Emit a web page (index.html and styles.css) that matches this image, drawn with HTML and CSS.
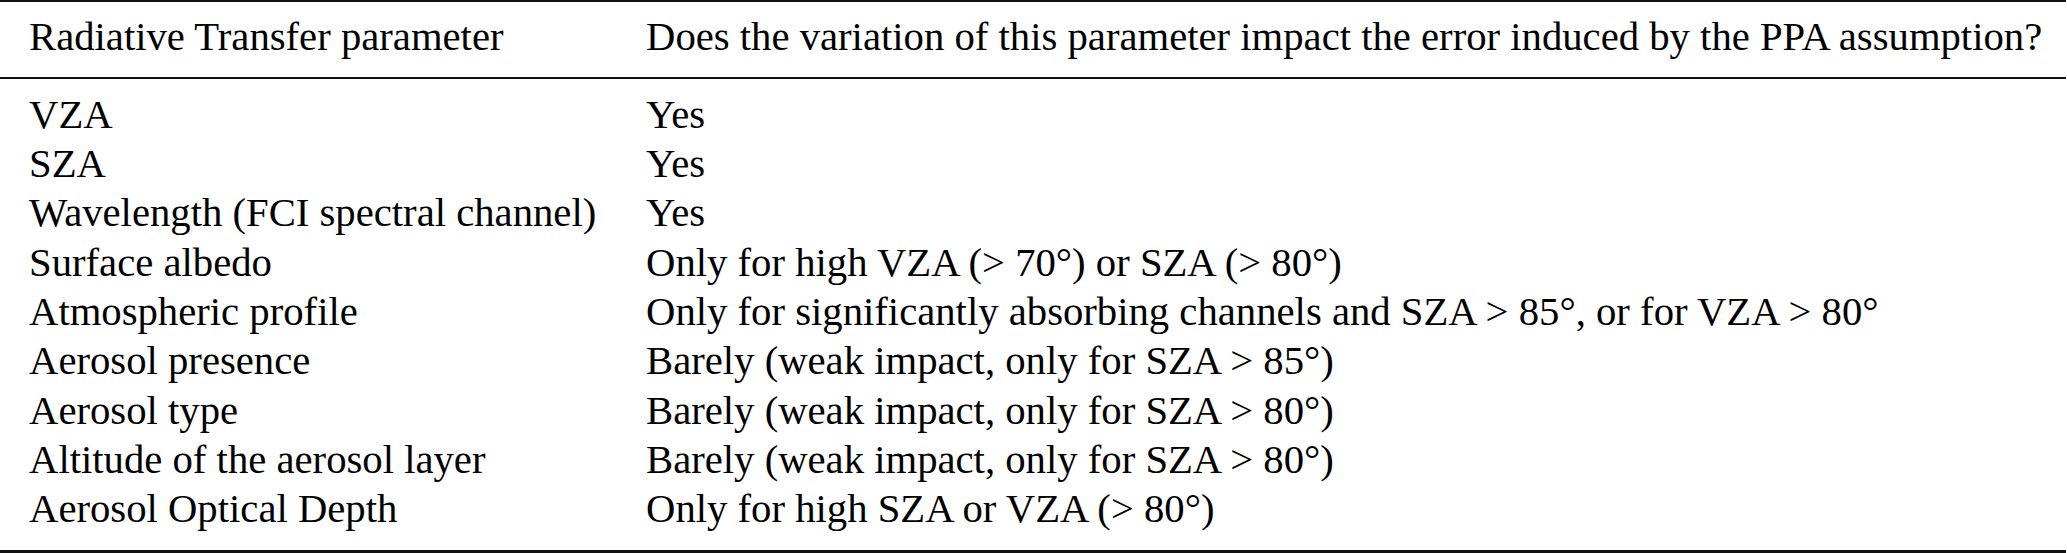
FILE: index.html
```html
<!DOCTYPE html>
<html lang="en">
<head>
<meta charset="utf-8">
<title>Radiative Transfer parameters</title>
<link rel="stylesheet" href="styles.css">
</head>
<body>
<div class="tbl">
  <div class="head">
    <div class="row">
      <span>Radiative Transfer parameter</span>
      <span>Does the variation of this parameter impact the error induced by the PPA assumption?</span>
    </div>
  </div>
  <div class="body">
    <div class="row"><span>VZA</span><span>Yes</span></div>
    <div class="row"><span>SZA</span><span>Yes</span></div>
    <div class="row"><span>Wavelength (FCI spectral channel)</span><span>Yes</span></div>
    <div class="row"><span>Surface albedo</span><span>Only for high VZA (&gt; 70°) or SZA (&gt; 80°)</span></div>
    <div class="row"><span>Atmospheric profile</span><span>Only for significantly absorbing channels and SZA &gt; 85°, or for VZA &gt; 80°</span></div>
    <div class="row"><span>Aerosol presence</span><span>Barely (weak impact, only for SZA &gt; 85°)</span></div>
    <div class="row"><span>Aerosol type</span><span>Barely (weak impact, only for SZA &gt; 80°)</span></div>
    <div class="row"><span>Altitude of the aerosol layer</span><span>Barely (weak impact, only for SZA &gt; 80°)</span></div>
    <div class="row"><span>Aerosol Optical Depth</span><span>Only for high SZA or VZA (&gt; 80°)</span></div>
  </div>
</div>
</body>
</html>
```

FILE: styles.css
```css
html, body {
  margin: 0;
  padding: 0;
  background: #ffffff;
}

.tbl {
  width: 2066px;
  font-family: "Liberation Serif", "Times New Roman", serif;
  font-size: 40.7px;
  color: #000000;
}

.head {
  border-top: 2px solid #111111;
  border-bottom: 2px solid #111111;
  padding: 9.85px 0 15.85px;
}

.body {
  padding: 10.85px 0 16.45px;
  border-bottom: 3px solid #111111;
}

.row {
  display: grid;
  grid-template-columns: 617px 1fr;
  padding-left: 29px;
  line-height: 49.3px;
  height: 49.3px;
  white-space: nowrap;
}
```
